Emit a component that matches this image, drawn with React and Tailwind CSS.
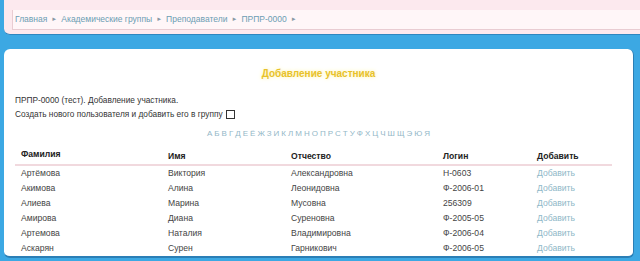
const rows = [
  ['Артёмова', 'Виктория', 'Александровна', 'Н-0603'],
  ['Акимова', 'Алина', 'Леонидовна', 'Ф-2006-01'],
  ['Алиева', 'Марина', 'Мусовна', '256309'],
  ['Амирова', 'Диана', 'Суреновна', 'Ф-2005-05'],
  ['Артемова', 'Наталия', 'Владимировна', 'Ф-2006-04'],
  ['Аскарян', 'Сурен', 'Гарникович', 'Ф-2006-05'],
]

const letters = 'А Б В Г Д Е Ё Ж З И К Л М Н О П Р С Т У Ф Х Ц Ч Ш Щ Э Ю Я'.split(' ')

const crumbs = ['Главная', 'Академические группы', 'Преподаватели', 'ПРПР-0000']

function Arrow() {
  return <span className="mx-[4px] text-[6px] text-[#8a9aa6] align-middle">►</span>
}

export default function App() {
  return (
    <div className="h-[261px] w-[640px] overflow-hidden bg-[#3ca8e3] font-['Liberation_Sans',sans-serif]">
      {/* breadcrumb panel */}
      <div className="ml-[4px] h-[35px] rounded-bl-[6px] bg-[#fce9ee] pt-[10px] pl-[8px] border-b border-[#2f86c0]">
        <div className="h-[20px] border-l border-b border-[#e9ccd2] bg-[#fff6f8] pl-[2px] pt-[3px] text-[8.5px] text-[#6c9db3]">
          {crumbs.map((c) => (
            <span key={c}>
              {c}
              <Arrow />
            </span>
          ))}
        </div>
      </div>

      {/* main panel */}
      <div className="mt-[14px] ml-[4px] mr-[6px] h-[209px] rounded-[6px] bg-white border-b-2 border-r border-[#2b7fb6] px-[11px]">
        <div className="pt-[17px] text-center text-[10px] font-bold text-[#e8c22a] [text-shadow:0_0_4px_#fbf0a0]">
          Добавление участника
        </div>
        <div className="mt-[12px] text-[8.3px] leading-[14px] text-[#333]">
          <div>ПРПР-0000 (тест). Добавление участника.</div>
          <div className="flex items-center">
            Создать нового пользователя и добавить его в группу
            <span className="ml-[3px] inline-block h-[9px] w-[9px] border border-[#333] bg-white"></span>
          </div>
        </div>
        <div className="mt-[7px] flex justify-center gap-[2px] text-[8px] text-[#93b7c7]">
          {letters.map((l) => (
            <span key={l}>{l}</span>
          ))}
        </div>
        <table className="mt-[8px] w-[597px] border-collapse text-[8.6px] text-[#444]">
          <thead>
            <tr className="border-b-2 border-[#f1d9de] text-left text-[#222]">
              <th className="w-[153px] pl-[6px] pb-[3px] font-bold">Фамилия</th>
              <th className="w-[123px] font-bold">Имя</th>
              <th className="w-[152px] font-bold">Отчество</th>
              <th className="w-[94px] font-bold">Логин</th>
              <th className="font-bold">Добавить</th>
            </tr>
          </thead>
          <tbody className="leading-[12.6px]">
            {rows.map((r, i) => (
              <tr key={i} className="h-[15px]">
                <td className="pl-[6px] pt-[1px]">{r[0]}</td>
                <td className="pt-[1px]">{r[1]}</td>
                <td className="pt-[1px]">{r[2]}</td>
                <td className="pt-[1px]">{r[3]}</td>
                <td className="pt-[1px] text-[#8fb8c8]">Добавить</td>
              </tr>
            ))}
          </tbody>
        </table>
      </div>
    </div>
  )
}
